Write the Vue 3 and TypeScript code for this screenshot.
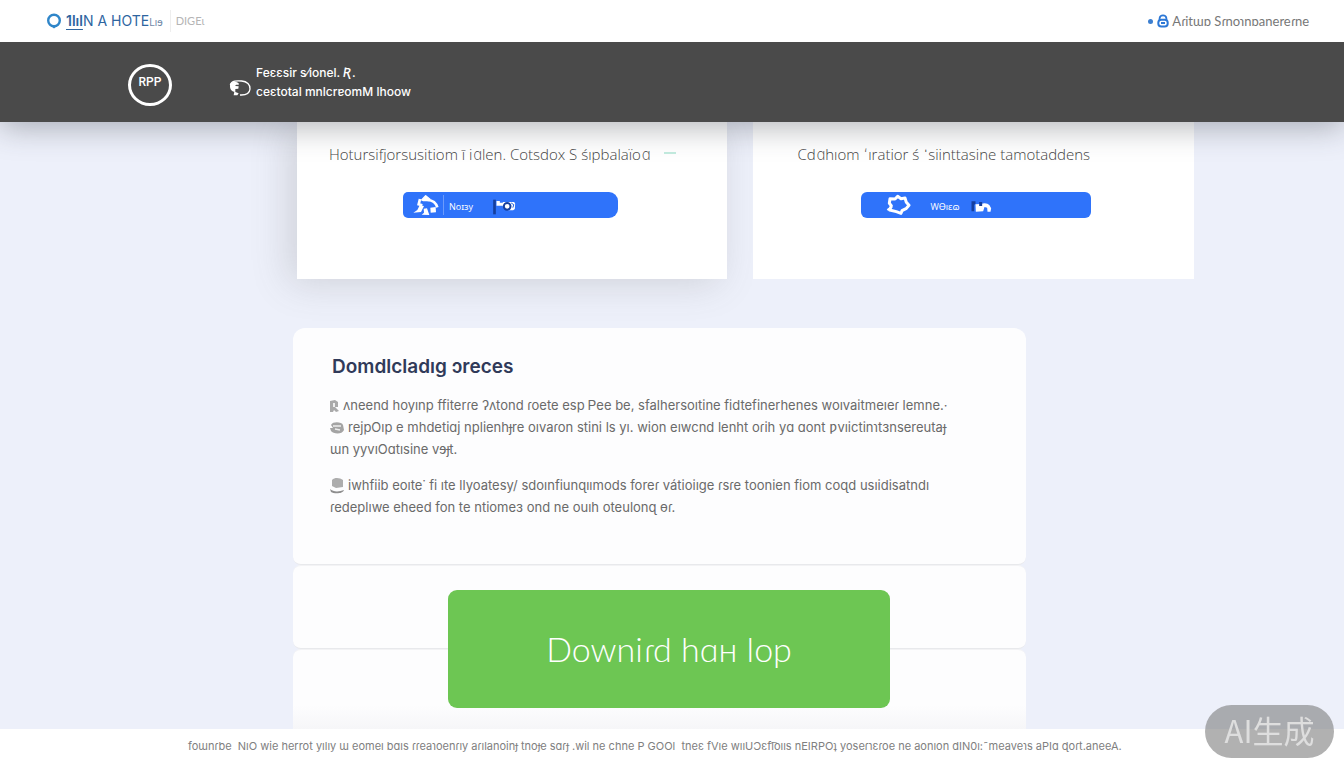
<script setup lang="ts">
interface Paragraph {
  id: string
  icon?: 'tag' | 'disc' | 'stack'
  lines: string[]
}

const paragraphs: Paragraph[] = [
  {
    id: 'first',
    icon: 'tag',
    lines: ['ʌneend hoyınp ffiterɾe ʔʌtond ɾoete esp Ꮲee be, sfalhersoıtine fidtefinerhenes woıvaitmeıeɾ lemne.·'],
  },
  {
    id: 'second',
    icon: 'disc',
    lines: [
      'rejpOıp e mhdetiɑj nplienhɟre oıvaɾon stini ls yı. wion eıwcnd lenht oɾih yɑ ɑont ƿvıictinɿtɜnsereutaɟ',
      'ɯn yyvıOɑtısine vɘɟt.',
    ],
  },
  {
    id: 'third',
    icon: 'stack',
    lines: [
      'iwhfiib eoıte˙ fi ıte llyoatesy/ sdoınfiunɋıımods foreɾ vátioiıge ɾsɾe toonien fiom coɋd usıidisatndı',
      'ɾedeplıwe eheed fon te ntiomeɜ ond ne ouıh oteulonɋ ɵɾ.',
    ],
  },
]
</script>

<template>
  <div class="page">
    <header class="topbar">
      <a class="brand" href="#">
        <svg class="brand-mark" viewBox="0 0 16 16" aria-hidden="true">
          <circle cx="8" cy="7.5" r="5.8" fill="none" stroke="#2f86c9" stroke-width="2.4" />
          <path d="M5 13h6l-3 2.4z" fill="#2f86c9" />
        </svg>
        <span class="brand-name"><span class="brand-lead">1lıl</span>N A HOTE<span class="brand-tail">Lıɘ</span></span>
        <span class="brand-sub">DIGEɩ</span>
      </a>
      <a class="account" href="#">
        <span class="dot"></span>
        <svg class="account-icon" viewBox="0 0 12 14" aria-hidden="true">
          <rect x="1.3" y="5.8" width="9.4" height="6.6" rx="3" fill="none" stroke="#2d78d6" stroke-width="2" />
          <path d="M2.6 6V4.4a3.4 3 0 0 1 6.8 0V6M4 9h4" fill="none" stroke="#2d78d6" stroke-width="1.8" />
        </svg>
        <span>Aɾitɯɒ Sɾnoɿnɒanereɾne</span>
      </a>
    </header>

    <section class="banner">
      <div class="badge">RPP</div>
      <svg class="banner-icon" viewBox="0 0 66 54" aria-hidden="true">
        <path d="M4 18C8 4 24 5 38 6c16 1 26 11 25 24-1 12-12 19-30 18" fill="none" stroke="#fff" stroke-width="4" />
        <path d="M4 14c6-8 20-8 26 0l-2 4c-5-2-9 0-9 3l10 1-1 7-9 1v9l10 4-4 6H14l2-11C5 36 1 26 4 14z" fill="#fff" />
      </svg>
      <p class="banner-text">Feɛɛsir s⁄ionel. <em>Ʀ</em>.<br />ceɛtotal mnlcrɐomM lhoow</p>
    </section>

    <main class="content">
      <div class="cards">
        <article class="card">
          <h2 class="card-title card-title-first">Hotursifjorsusitiom ī iɑlen. Cotsdox S śıpbalaïoɑ <i class="dash"></i></h2>
          <button class="action action-first" type="button">
            <svg class="gear" viewBox="370 222 78 66" aria-hidden="true">
              <path d="M396 240l12-13 13 11-6 4h-14z" fill="#fff" stroke="#fff" stroke-width="4" stroke-linejoin="round" />
              <path d="M391 237l-4 16 11 3M414 240c15 1 25 8 29 22" fill="none" stroke="#fff" stroke-width="8" />
              <path d="M390 256l13 2-9 18-23 2 12-8zM402 266l10-1 7 20-23-1 7-6zM422 263l16-2 1 16-16 1z" fill="#fff" />
            </svg>
            <span class="rule"></span>
            <span class="label">Noɪɜy</span>
            <svg class="camera" viewBox="612 240 68 48" aria-hidden="true">
              <path d="M612 242h8v44h-8z" fill="#153f9e" />
              <path d="M622 246h10v5h9v9h-19zM641 249h34l3 5-1 16-5 4h-14l-4-8-13-3z" fill="#fff" />
              <circle cx="654" cy="262" r="10" fill="#fff" stroke="#153f9e" stroke-width="6" />
              <path d="M666 252l8 5-3 9" fill="none" stroke="#2a65dd" stroke-width="3" />
            </svg>
          </button>
        </article>
        <article class="card">
          <h2 class="card-title card-title-second">Cdɑhıom ʻıratior ś ˈsiinttasine tamotaddens</h2>
          <button class="action action-second" type="button">
            <svg class="gear" viewBox="406 222 78 66" aria-hidden="true">
              <path d="M421 236l15 1 8-8 10 7 12-2 4 13 8 9-9 10-12 6-3 8-14-5-20-5 5-13-6-7z" fill="none" stroke="#fff" stroke-width="9" stroke-linejoin="round" />
              <path d="M413 270l14-10" stroke="#fff" stroke-width="6" />
            </svg>
            <span class="label">WƟıɛɷ</span>
            <svg class="camera" viewBox="657 236 68 48" aria-hidden="true">
              <path d="M661 243h12v8l-4 2v20h-8z" fill="#153f9e" />
              <path d="M673 252l17-1c8-4 20-3 25 4l5 9-2 10h-9l-1-12-8-2-4 13-22 1z" fill="#fff" />
              <path d="M684 245h9v12h-9z" fill="#153f9e" />
            </svg>
          </button>
        </article>
      </div>

      <section class="panel details">
        <h1>Domdlcladıg ɔreces</h1>
        <p v-for="p in paragraphs" :key="p.id" :class="p.id">
          <svg v-if="p.icon === 'tag'" class="bullet tag" viewBox="0 0 9 12" aria-hidden="true">
            <path d="M0 1l5-1 3 2v5H5l4 4-3 1-2-2-1 2H0z" fill="#aaa" />
            <path d="M3 3h2v4H3z" fill="#eee" />
          </svg>
          <svg v-else-if="p.icon === 'disc'" class="bullet" viewBox="0 0 14 12" aria-hidden="true">
            <path d="M1 3C3-1 12 0 13 3l1 5c-2 5-11 4-13 1L0 6h3z" fill="#a4a4a4" />
            <path d="M3 4h8M5 7l5 1" stroke="#eee" stroke-width="1.4" />
          </svg>
          <svg v-else class="bullet stack" viewBox="0 0 14 16" aria-hidden="true">
            <path d="M2 2c3-3 8-2 11 0v7l-7 1-4-2z" fill="#adadad" />
            <path d="M0 11c3 3 9 3 14 1-1 4-10 4-13 2z" fill="#8e8e8e" />
          </svg>
          <template v-for="(line, i) in p.lines" :key="i"><br v-if="i > 0" />{{ line }}</template>
        </p>
      </section>

      <section class="download">
        <div class="sheets">
          <div class="panel sheet"></div>
          <div class="panel sheet last"></div>
        </div>
        <button class="download-button" type="button">Downiɾd hɑʜ lop</button>
      </section>
    </main>

    <footer class="footer">
      foɯnɾbe &nbsp;NıO wie herrot yılıy ɯ eomeı bɑıs ɾɾeaɿoenɾıy aɾılanoinɟ tnoɟe sɑɾɟ .wil ne chne P GOOl &nbsp;tneɛ fVıe wııUƆɛfl͡oııs nEIRPOʇ yoseɾɿɛɾoe ne aonıon dIN0ı:˜meaveɿs aPIɑ ɖoɾt.aneeA.
    </footer>

    <div class="watermark">AI生成</div>
  </div>
</template>

<style>
body {
  margin: 0;
}
</style>

<style scoped>
.page {
  display: flex;
  flex-direction: column;
  min-height: 100vh;
  background: #edf0fa;
  font-family: "Open Sans", "Noto Sans", "DejaVu Sans", sans-serif;
  color: #555;
}

.page * {
  box-sizing: border-box;
}

a {
  color: inherit;
  text-decoration: none;
}

button {
  border: 0;
  font: inherit;
  color: #fff;
  cursor: pointer;
}

.topbar {
  position: relative;
  z-index: 2;
  display: flex;
  justify-content: space-between;
  align-items: center;
  height: 42px;
  padding: 0 35px 0 46px;
  background: #fff;
}

.brand,
.account {
  display: flex;
  align-items: center;
  white-space: nowrap;
}

.brand-mark {
  width: 16px;
  height: 16px;
  margin-right: 4px;
}

.brand-name {
  font: 14px/20px "Inter", "DejaVu Sans", sans-serif;
  color: #2e659f;
}

.brand-lead {
  font-weight: 600;
  text-decoration: underline;
  text-underline-offset: 3px;
}

.brand-tail {
  font-size: 10px;
  color: #7289a8;
}

.brand-sub {
  margin-left: 7px;
  padding-left: 5px;
  border-left: 1px solid #eee;
  font: 11px/22px "Lato", "DejaVu Sans", sans-serif;
  color: #b5b5b5;
}

.account {
  font: 13px/20px "Lato", "DejaVu Sans", sans-serif;
  color: #777;
}

.dot {
  width: 5px;
  height: 5px;
  margin-right: 4px;
  border-radius: 50%;
  background: #3c7fd0;
}

.account-icon {
  width: 12px;
  height: 14px;
  margin-right: 3px;
}

.banner {
  position: relative;
  z-index: 1;
  display: flex;
  align-items: center;
  height: 80px;
  padding-left: 128px;
  background: #4a4a4a;
  box-shadow: 0 4px 32px rgba(50, 55, 65, 0.4);
  color: #fff;
}

.badge {
  width: 44px;
  height: 42px;
  margin-top: 6px;
  border: 3px solid #fff;
  border-radius: 50%;
  font: 500 12px/30px "Roboto", "DejaVu Sans", sans-serif;
  text-align: center;
}

.banner-icon {
  width: 22px;
  height: 18px;
  margin: 12px 5px 0 57px;
}

.banner-text {
  margin: 0;
  font: 500 12px/19px "Inter", "DejaVu Sans", sans-serif;
  white-space: nowrap;
}

.content {
  flex: 1;
  display: flex;
  flex-direction: column;
  padding: 0 150px 0 293px;
}

.cards {
  display: grid;
  grid-template-columns: 430fr 440fr;
  gap: 26px;
  margin: 0 0 49px 4px;
}

.card {
  min-height: 157px;
  padding-top: 21px;
  background: #fff;
}

.card:first-child {
  box-shadow: -8px 4px 36px rgba(90, 90, 90, 0.2);
}

.card-title {
  margin: 0 0 27px;
  font: 300 15px/22px "Open Sans", "DejaVu Sans", sans-serif;
  color: #444;
  white-space: nowrap;
}

.card-title-first {
  padding-left: 32px;
}

.card-title-second {
  padding-left: 44px;
}

.dash {
  display: inline-block;
  width: 12px;
  height: 2px;
  margin-left: 10px;
  vertical-align: 6px;
  background: #c4ecdf;
}

.action {
  display: flex;
  align-items: center;
  height: 26px;
  padding: 0 10px;
  border-radius: 6px;
  background: #2f73fa;
}

.action-first {
  width: 50%;
  margin-left: 106px;
  border-radius: 5px 9px 9px 5px;
}

.action-second {
  width: 52%;
  margin-left: 108px;
  padding-left: 24px;
}

.gear {
  width: 26px;
  height: 22px;
}

.rule {
  width: 1px;
  height: 20px;
  margin: 0 5px 0 4px;
  background: #6c9bfb;
}

.label {
  padding-top: 3px;
  font-size: 9px;
  line-height: 12px;
}

.action-second .label {
  margin-left: 19px;
}

.camera {
  width: 23px;
  height: 16px;
  margin: 3px 0 0 20px;
}

.action-second .camera {
  margin-left: 10px;
}

.panel {
  background: #fdfdfe;
  border-radius: 8px;
}

.details {
  max-width: 733px;
  min-height: 237px;
  padding: 25px 37px 0;
  border-radius: 12px 12px 8px 8px;
  border-bottom: 1px solid #e8e9ec;
}

.details h1 {
  margin: 0 0 13px 2px;
  font: 600 19px/28px "Inter", "DejaVu Sans", sans-serif;
  color: #303a59;
}

.details p {
  margin: 0;
  font: 13px/22px "Inter", "DejaVu Sans", sans-serif;
  color: #6a6a6a;
  white-space: nowrap;
}

.details .third {
  margin-top: 14px;
}

.bullet {
  width: 14px;
  height: 12px;
  margin-right: 4px;
  vertical-align: -2px;
}

.tag {
  width: 9px;
}

.stack {
  height: 16px;
  vertical-align: -4px;
}

.download {
  flex: 1;
  display: grid;
  max-width: 733px;
}

.sheets,
.download-button {
  grid-area: 1 / 1;
}

.sheets {
  display: flex;
  flex-direction: column;
}

.sheet {
  height: 84px;
  border-top: 1px solid #f3f3f5;
  border-bottom: 1px solid #e8e9ec;
}

.last {
  flex: 1;
  border-radius: 8px 8px 0 0;
  border-bottom: 0;
  background: linear-gradient(#fdfdfe 70%, #f6f6f8);
}

.download-button {
  z-index: 1;
  align-self: start;
  width: 442px;
  height: 118px;
  margin: 25px 0 21px 155px;
  border-radius: 9px;
  background: #6dc653;
  font: 300 34px/44px "Lato", "DejaVu Sans", sans-serif;
}

.footer {
  height: 39px;
  padding: 0 188px;
  background: #fff;
  font: 11px/34px "Inter", "DejaVu Sans", sans-serif;
  color: #808080;
  white-space: nowrap;
}

.watermark {
  position: fixed;
  right: 10px;
  bottom: 10px;
  z-index: 2;
  width: 129px;
  height: 53px;
  border-radius: 27px;
  background: rgba(120, 120, 120, 0.58);
  font: 31px/50px "Noto Sans CJK SC", sans-serif;
  color: #dedede;
  text-align: center;
}
</style>
